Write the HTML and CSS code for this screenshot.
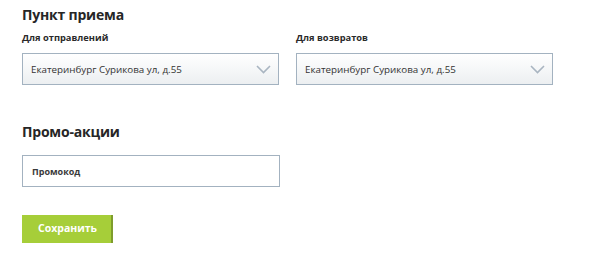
FILE: index.html
```html
<!DOCTYPE html>
<html lang="ru">
<head>
<meta charset="utf-8">
<link rel="stylesheet" href="styles.css">
</head>
<body>
<div class="page">
  <h2 class="title">Пункт приема</h2>
  <div class="row">
    <div class="field">
      <div class="label">Для отправлений</div>
      <div class="select">
        <span class="select-text">Екатеринбург Сурикова ул, д.55</span>
        <svg class="chev" width="15" height="9" viewBox="0 0 15 9"><path d="M1 1 L7.5 7.5 L14 1" fill="none" stroke="#a9b5c1" stroke-width="1.6"/></svg>
      </div>
    </div>
    <div class="field">
      <div class="label">Для возвратов</div>
      <div class="select">
        <span class="select-text">Екатеринбург Сурикова ул, д.55</span>
        <svg class="chev" width="15" height="9" viewBox="0 0 15 9"><path d="M1 1 L7.5 7.5 L14 1" fill="none" stroke="#a9b5c1" stroke-width="1.6"/></svg>
      </div>
    </div>
  </div>
  <h2 class="title promo-title">Промо-акции</h2>
  <div class="input">Промокод</div>
  <button class="btn">Сохранить</button>
</div>
</body>
</html>
```
FILE: styles.css
```css
* { box-sizing: border-box; }
body {
  margin: 0;
  background: #fff;
  font-family: "Open Sans", "DejaVu Sans", sans-serif;
  color: #333;
}
.page {
  padding: 5px 22px 0 22px;
  width: 595px;
}
.title {
  margin: 0;
  font-size: 14px;
  font-weight: 700;
  letter-spacing: -0.2px;
  color: #262626;
  line-height: 20px;
}
.row {
  display: flex;
  gap: 17px;
  margin-top: 6px;
}
.field { width: 257px; }
.label {
  font-size: 9.3px;
  font-weight: 700;
  color: #2a2a2a;
  line-height: 14px;
}
.select {
  margin-top: 8px;
  height: 32px;
  border: 1px solid #a3b2c0;
  background: linear-gradient(#ffffff, #eceff1);
  display: flex;
  align-items: center;
  justify-content: space-between;
  padding: 0 7px 0 8px;
}
.select-text {
  font-size: 9.8px;
  color: #333;
}
.chev { display: block; }
.promo-title {
  margin-top: 37px;
}
.input {
  margin-top: 13px;
  width: 258px;
  height: 32px;
  border: 1px solid #a3b2c0;
  background: #fff;
  display: flex;
  align-items: center;
  padding-left: 9px;
  font-size: 9px;
  font-weight: 700;
  color: #3a3a3a;
}
.btn {
  margin-top: 28px;
  width: 91px;
  height: 28px;
  border: 0;
  background: #a6ce39;
  box-shadow: inset -2px 0 0 #7e9c2c;
  color: #fff;
  font-family: "Open Sans", sans-serif;
  font-size: 10.5px;
  font-weight: 700;
  padding: 0 0 2px 0;
  display: block;
}
```
